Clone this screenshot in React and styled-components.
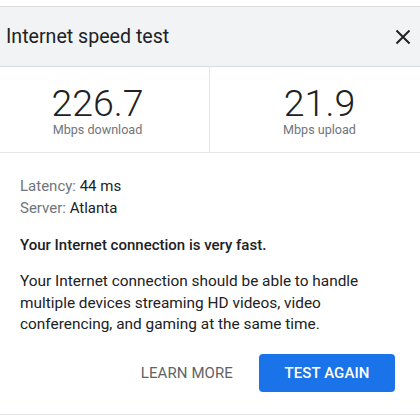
import React from "react";
import styled, { createGlobalStyle } from "styled-components";

const Global = createGlobalStyle`
  html, body { margin: 0; padding: 0; background: #ffffff; }
  body { font-family: Roboto, "Liberation Sans", Arial, sans-serif; color: #202124; }
`;

const Page = styled.div`
  width: 420px;
  padding-top: 6px;
`;

const Card = styled.div`
  border-top: 1px solid #dadce0;
  border-bottom: 1px solid #e3e5e8;
  background: #ffffff;
`;

const Header = styled.div`
  height: 59px;
  background: #f1f3f4;
  border-bottom: 1px solid #dadce0;
  display: flex;
  align-items: center;
  justify-content: space-between;
  padding: 0 9px 0 6px;
`;

const Title = styled.h1`
  margin: 0;
  font-size: 19.6px;
  font-weight: 400;
  color: #202124;
`;

const CloseButton = styled.button`
  border: 0;
  background: transparent;
  padding: 0;
  width: 16px;
  height: 16px;
  display: flex;
  align-items: center;
  justify-content: center;
  cursor: pointer;
`;

const Stats = styled.div`
  display: grid;
  grid-template-columns: 210px 1fr;
  height: 85px;
  border-bottom: 1px solid #e3e5e8;
`;

const Stat = styled.div`
  display: flex;
  flex-direction: column;
  align-items: center;
  padding-top: 18px;
  padding-left: ${(p) => p.$padLeft || 0}px;
  padding-right: ${(p) => p.$padRight || 0}px;
  border-right: ${(p) => (p.$divider ? "1px solid #e3e5e8" : "0")};
`;

const Value = styled.div`
  font-size: 37.5px;
  font-weight: 300;
  line-height: 36px;
  color: #202124;
`;

const Unit = styled.div`
  font-size: 12.6px;
  line-height: 16px;
  margin-top: 1px;
  color: #70757a;
`;

const Body = styled.div`
  padding: 22px 20px 0 20px;
  font-size: 15px;
`;

const Meta = styled.div`
  line-height: 22px;
`;

const Label = styled.span`
  color: #70757a;
`;

const Verdict = styled.p`
  margin: 15px 0 0 0;
  font-weight: 500;
  line-height: 22px;
`;

const Description = styled.p`
  margin: 15px 0 0 0;
  font-size: 15.4px;
  line-height: 21.5px;
`;

const Actions = styled.div`
  display: flex;
  justify-content: flex-end;
  align-items: center;
  gap: 26px;
  padding: 18px 25px 22px 0;
`;

const TextButton = styled.button`
  border: 0;
  background: transparent;
  font-family: inherit;
  font-size: 15px;
  font-weight: 400;
  color: #5f6368;
  padding: 0;
  letter-spacing: 0.1px;
`;

const PrimaryButton = styled.button`
  border: 0;
  border-radius: 4px;
  background: #1a73e8;
  color: #ffffff;
  font-family: inherit;
  font-size: 15px;
  font-weight: 500;
  width: 136px;
  height: 38px;
  letter-spacing: 0.1px;
`;

export default function App() {
  return (
    <Page>
      <Global />
      <Card>
        <Header>
          <Title>Internet speed test</Title>
          <CloseButton aria-label="Close">
            <svg width="16" height="16" viewBox="0 0 16 16">
              <path d="M1.5 1.5 L14.5 14.5 M14.5 1.5 L1.5 14.5" stroke="#202124" strokeWidth="2" />
            </svg>
          </CloseButton>
        </Header>
        <Stats>
          <Stat $divider $padRight={14}>
            <Value>226.7</Value>
            <Unit>Mbps download</Unit>
          </Stat>
          <Stat $padLeft={9}>
            <Value>21.9</Value>
            <Unit>Mbps upload</Unit>
          </Stat>
        </Stats>
        <Body>
          <Meta>
            <Label>Latency:</Label> 44 ms
            <br />
            <Label>Server:</Label> Atlanta
          </Meta>
          <Verdict>Your Internet connection is very fast.</Verdict>
          <Description>
            Your Internet connection should be able to handle multiple devices streaming HD videos, video
            conferencing, and gaming at the same time.
          </Description>
        </Body>
        <Actions>
          <TextButton>LEARN MORE</TextButton>
          <PrimaryButton>TEST AGAIN</PrimaryButton>
        </Actions>
      </Card>
    </Page>
  );
}
